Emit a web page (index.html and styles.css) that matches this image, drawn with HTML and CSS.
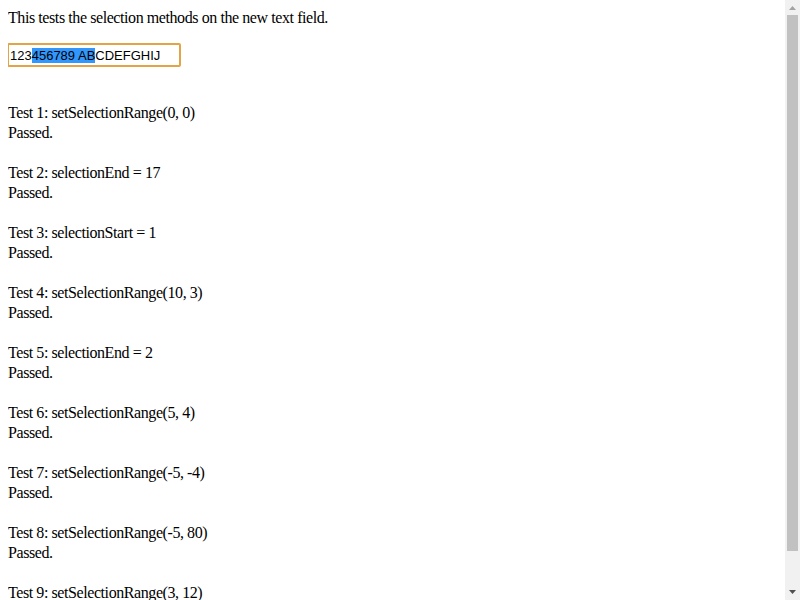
FILE: index.html
```html
<!DOCTYPE html>
<html>
<head>
<meta charset="utf-8">
<link rel="stylesheet" href="styles.css">
</head>
<body>
<div class="intro">This tests the selection methods on the new text field.</div>
<div class="field"><span class="field-text">123<span class="sel">456789 AB</span>CDEFGHIJ</span></div>
<div class="results">
<div class="test">Test 1: setSelectionRange(0, 0)</div>
<div class="res">Passed.</div>
<div class="test">Test 2: selectionEnd = 17</div>
<div class="res">Passed.</div>
<div class="test">Test 3: selectionStart = 1</div>
<div class="res">Passed.</div>
<div class="test">Test 4: setSelectionRange(10, 3)</div>
<div class="res">Passed.</div>
<div class="test">Test 5: selectionEnd = 2</div>
<div class="res">Passed.</div>
<div class="test">Test 6: setSelectionRange(5, 4)</div>
<div class="res">Passed.</div>
<div class="test">Test 7: setSelectionRange(-5, -4)</div>
<div class="res">Passed.</div>
<div class="test">Test 8: setSelectionRange(-5, 80)</div>
<div class="res">Passed.</div>
<div class="test">Test 9: setSelectionRange(3, 12)</div>
<div class="res">Passed.</div>
</div>
<div class="scrollbar">
  <div class="sb-btn sb-up"><svg width="7" height="4" viewBox="0 0 7 4"><polygon points="0,4 7,4 3.5,0" fill="#a3a3a3"/></svg></div>
  <div class="sb-track"><div class="sb-thumb"></div></div>
  <div class="sb-btn sb-down"><svg width="7" height="4" viewBox="0 0 7 4"><polygon points="0,0 7,0 3.5,4" fill="#505050"/></svg></div>
</div>
</body>
</html>
```
FILE: styles.css
```css
html {
  background: #ffffff;
}
body {
  margin: 8px;
  font-family: "Liberation Serif", "Times New Roman", serif;
  font-size: 16px;
  line-height: 20px;
  letter-spacing: -0.42px;
  color: #000000;
}
.intro {
  margin: 0;
}
.field {
  margin-top: 15px;
  margin-left: -1px;
  width: 169px;
  height: 20px;
  border: 2px solid #e3a447;
  border-radius: 2px;
  box-sizing: content-box;
  display: flex;
  align-items: center;
  padding-left: 1px;
  font-family: "Liberation Sans", Arial, sans-serif;
  font-size: 13px;
  line-height: 15px;
  letter-spacing: 0;
  white-space: nowrap;
  overflow: hidden;
}
.sel {
  background: #3297fd;
}
.results {
  margin-top: 36px;
}
.res {
  margin-bottom: 20px;
}
.scrollbar {
  position: fixed;
  top: 0;
  right: 0;
  width: 15px;
  height: 600px;
  background: #f1f1f1;
  display: flex;
  flex-direction: column;
}
.sb-btn {
  height: 15px;
  display: flex;
  justify-content: center;
  align-items: center;
}
.sb-up {
  align-items: flex-start;
  padding-top: 6px;
  box-sizing: border-box;
}
.sb-down {
  align-items: flex-start;
  padding-top: 5px;
  box-sizing: border-box;
}
.sb-track {
  flex: 1;
  padding: 0 2px;
}
.sb-thumb {
  height: 536px;
  background: #c1c1c1;
}
```
